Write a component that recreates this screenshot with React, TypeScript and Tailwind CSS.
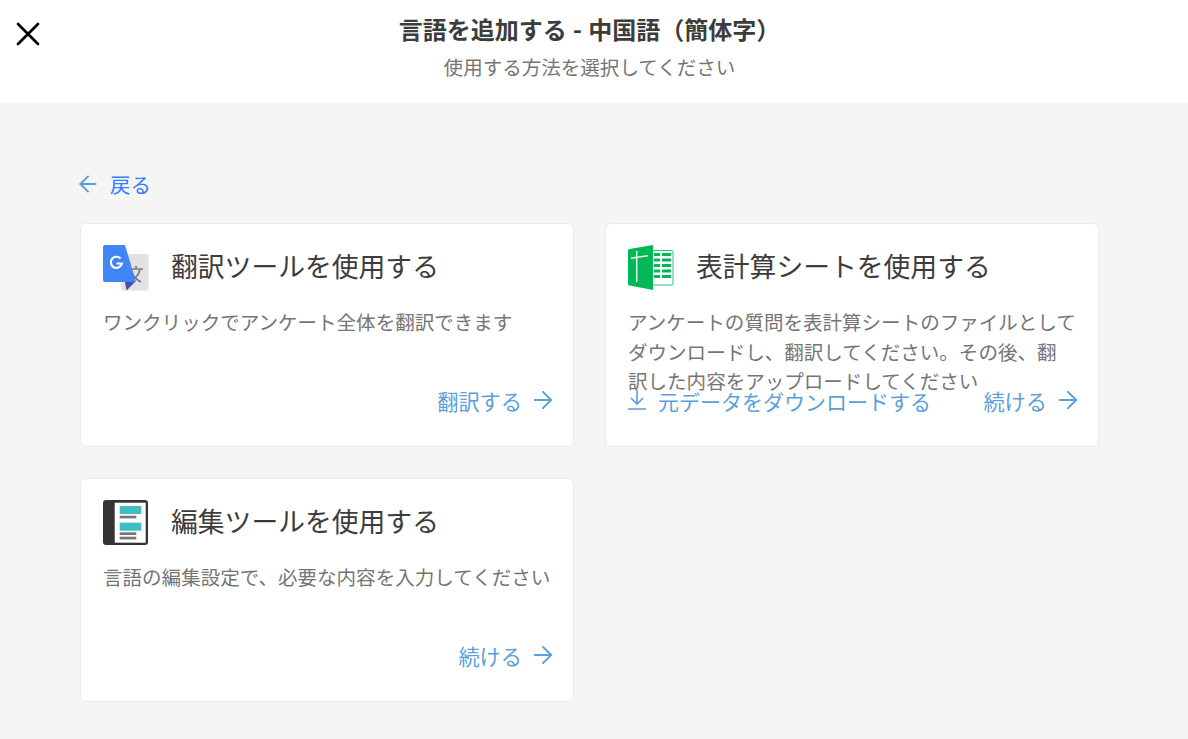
import React from 'react';
import { ArrowLeft, ArrowRight, X } from 'lucide-react';

const font = 'font-["Roboto","Noto_Sans_CJK_JP",sans-serif]';

const TranslateIcon = () => (
  <svg width="46" height="46" viewBox="0 0 46 46" className="shrink-0">
    <rect x="18" y="9" width="27.500" height="36.500" rx="2" fill="#e2e2e2" />
    <path d="M26 24h14M33 21v3M37 24c-1 6-6 11-10 13M29 27c1 4 5 8 9 10" stroke="#7c7c7c" strokeWidth="1.700" fill="none" />
    <path d="M2 0h20l11 37H2a2 2 0 0 1-2-2V2a2 2 0 0 1 2-2z" fill="#4285f4" />
    <path d="M22 37h10l-8.500 8.500z" fill="#3f51b5" />
    <path d="M17.500 13.500a5.600 5.600 0 1 0 1.400 5h-5.400" stroke="#fff" strokeWidth="2.200" fill="none" />
  </svg>
);

const SheetIcon = () => (
  <svg width="46" height="46" viewBox="0 0 46 46" className="shrink-0">
    <rect x="24" y="5.500" width="21" height="34.500" rx="1" fill="#fff" stroke="#2cc878" strokeWidth="1" />
    <path d="M26 9.500h6M34 9.500h9M26 15h6M34 15h9M26 20.500h6M34 20.500h9M26 26h6M34 26h9M26 31.500h6M34 31.500h9" stroke="#00b956" strokeWidth="3.200" />
    <path d="M1.500 4L25 0v45L1.500 40.500A1.500 1.500 0 0 1 0 39V5.500A1.500 1.500 0 0 1 1.500 4z" fill="#00b956" />
    <path d="M3 13.300l16.700-2.600M8.700 6v31" stroke="#e6f9ee" strokeWidth="1.500" fill="none" />
  </svg>
);

const EditorIcon = () => (
  <svg width="46" height="46" viewBox="0 0 46 46" className="shrink-0">
    <rect width="45" height="45" rx="3" fill="#333" />
    <rect x="11.700" y="2.700" width="31" height="40" fill="#fff" />
    <rect x="16.700" y="6" width="21.600" height="8" fill="#3dbfc2" />
    <rect x="16.700" y="15.700" width="16.600" height="2.700" fill="#777" />
    <rect x="16.700" y="22.700" width="21.600" height="8" fill="#3dbfc2" />
    <rect x="16.700" y="32.300" width="16.600" height="2.700" fill="#777" />
    <rect x="16.700" y="36.700" width="16.600" height="2.700" fill="#777" />
  </svg>
);

const Action = ({ label }: { label: string }) => (
  <a className="flex items-center gap-[7px] text-[21.200px] leading-[30px] text-[#5b9fdc]">
    {label}
    <ArrowRight size={28} strokeWidth={1.700} className="-mt-[6px]" />
  </a>
);

const Card = ({ icon, title, text, children }: { icon: React.ReactNode; title: string; text: React.ReactNode; children: React.ReactNode }) => (
  <div className="flex h-[224px] flex-col rounded-md border border-[#ebebeb] bg-white pb-[28px] pl-[22px] pr-[16px] pt-[21px]">
    <div className="flex items-center gap-[22px]">
      {icon}
      <h2 className="text-[26.800px] leading-[46px] text-[#3c3c3c]">{title}</h2>
    </div>
    <p className="mt-[18px] min-h-0 flex-1 text-[19.550px] leading-[29.500px] text-[#757575]">{text}</p>
    <div className="flex items-center justify-end">{children}</div>
  </div>
);

export default function App() {
  return (
    <div className={`flex h-[739px] flex-col overflow-hidden bg-[#f5f5f5] ${font}`}>
      <header className="relative flex h-[103px] shrink-0 flex-col items-center bg-white pr-[9px] pt-[13px]">
        <button className="absolute left-[8px] top-[14px] text-black">
          <X size={40} strokeWidth={1.600} />
        </button>
        <h1 className="text-[24px] font-bold leading-[36px] text-[#3c3c3c]">言語を追加する - 中国語（簡体字）</h1>
        <p className="mt-[2px] text-[19.550px] leading-[36px] text-[#757575]">使用する方法を選択してください</p>
      </header>

      <main className="flex flex-col pl-[80px] pr-[89px] pt-[66px]">
        <a className="mb-[23px] flex h-[31px] items-center gap-[9px] pt-[4px] text-[20.500px] text-[#2f7fff]">
          <ArrowLeft size={26} strokeWidth={1.800} className="-ml-[5px] -mt-[5px] text-[#5b9fdc]" />
          戻る
        </a>
        <div className="grid grid-cols-[494px_494px] gap-x-[31px] gap-y-[31px]">
          <Card icon={<TranslateIcon />} title="翻訳ツールを使用する" text="ワンクリックでアンケート全体を翻訳できます">
            <Action label="翻訳する" />
          </Card>
          <Card
            icon={<SheetIcon />}
            title="表計算シートを使用する"
            text={
              <>
                アンケートの質問を表計算シートのファイルとしてダウンロードし、翻訳してください。その後、翻
                <br />
                訳した内容をアップロードしてください
              </>
            }
          >
            <a className="mr-auto flex items-center gap-[11px] text-[21px] leading-[30px] text-[#5b9fdc]">
              <svg width="20" height="22" viewBox="0 0 20 22" fill="none" stroke="currentColor" strokeWidth="1.600" className="-ml-[1px] -mt-[6px]">
                <path d="M10 1v13M4 9l6 6 6-6M1 20h18" />
              </svg>
              元データをダウンロードする
            </a>
            <Action label="続ける" />
          </Card>
          <Card icon={<EditorIcon />} title="編集ツールを使用する" text="言語の編集設定で、必要な内容を入力してください">
            <Action label="続ける" />
          </Card>
        </div>
      </main>
    </div>
  );
}
